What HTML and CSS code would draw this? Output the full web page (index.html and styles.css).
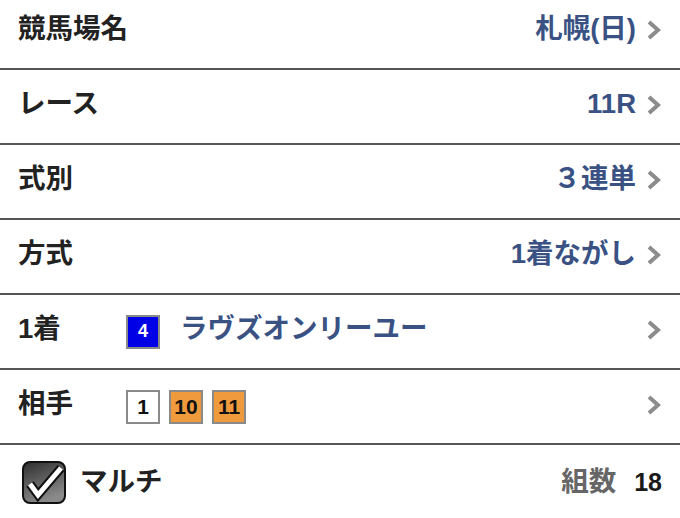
FILE: index.html
```html
<!DOCTYPE html>
<html lang="ja">
<head>
    <meta charset="UTF-8">
    <meta name="viewport" content="width=device-width, initial-scale=1.0">
    <title>投票内容</title>
    <link rel="stylesheet" href="styles.css">
</head>
<body>
    <div class="bet-list">
        <div class="row">
            <span class="label">競馬場名</span>
            <div class="row-right">
                <span class="value">札幌(日)</span>
                <svg class="chevron" width="16" height="22" viewBox="0 0 16 22"><polyline points="3,3 12,11 3,19" /></svg>
            </div>
        </div>
        <div class="row">
            <span class="label">レース</span>
            <div class="row-right">
                <span class="value">11R</span>
                <svg class="chevron" width="16" height="22" viewBox="0 0 16 22"><polyline points="3,3 12,11 3,19" /></svg>
            </div>
        </div>
        <div class="row">
            <span class="label">式別</span>
            <div class="row-right">
                <span class="value">３連単</span>
                <svg class="chevron" width="16" height="22" viewBox="0 0 16 22"><polyline points="3,3 12,11 3,19" /></svg>
            </div>
        </div>
        <div class="row">
            <span class="label">方式</span>
            <div class="row-right">
                <span class="value">1着ながし</span>
                <svg class="chevron" width="16" height="22" viewBox="0 0 16 22"><polyline points="3,3 12,11 3,19" /></svg>
            </div>
        </div>
        <div class="row">
            <span class="label label-short">1着</span>
            <div class="horses">
                <span class="num num-blue">4</span>
                <span class="value horse-name">ラヴズオンリーユー</span>
            </div>
            <svg class="chevron" width="16" height="22" viewBox="0 0 16 22"><polyline points="3,3 12,11 3,19" /></svg>
        </div>
        <div class="row">
            <span class="label label-short">相手</span>
            <div class="horses">
                <span class="num num-white">1</span>
                <span class="num num-orange">10</span>
                <span class="num num-orange">11</span>
            </div>
            <svg class="chevron" width="16" height="22" viewBox="0 0 16 22"><polyline points="3,3 12,11 3,19" /></svg>
        </div>
        <div class="row row-last">
            <div class="multi">
                <svg class="checkbox" width="46" height="46" viewBox="0 0 46 46">
                    <defs>
                        <linearGradient id="boxGrad" x1="0" y1="0" x2="0.4" y2="1">
                            <stop offset="0" stop-color="#2e2e2e" />
                            <stop offset="1" stop-color="#8a8a8a" />
                        </linearGradient>
                    </defs>
                    <rect x="2" y="2" width="42" height="41" rx="7" fill="url(#boxGrad)" stroke="#111" stroke-width="2" />
                    <polyline points="9,24 17,35 40,8" fill="none" stroke="#111" stroke-width="9" stroke-linejoin="miter" />
                    <polyline points="9,24 17,35 40,8" fill="none" stroke="#fff" stroke-width="5" stroke-linejoin="miter" />
                </svg>
                <span class="label">マルチ</span>
            </div>
            <div class="row-right">
                <span class="count-label">組数</span>
                <span class="count">18</span>
            </div>
        </div>
    </div>
</body>
</html>
```

FILE: styles.css
```css
* {
    margin: 0;
    padding: 0;
    box-sizing: border-box;
}

body {
    background: white;
    font-family: "Liberation Sans", "Noto Sans CJK JP", sans-serif;
    font-weight: bold;
    overflow: hidden;
}

.bet-list {
    margin-top: -5px;
}

.row {
    height: 75px;
    display: flex;
    align-items: center;
    padding: 0 18px;
    border-bottom: 2px solid #555;
}

.row-last {
    border-bottom: none;
    padding-left: 21px;
}

/* text sits a little above the row's centre line */
.label,
.value,
.count-label,
.count {
    line-height: 1.2;
    margin-bottom: 6px;
}

.row-last .label,
.row-last .count-label,
.row-last .count {
    margin-bottom: 2px;
}

.label {
    font-size: 27.5px;
    color: #222;
}

.label-short {
    width: 108px;
}

.row-right {
    margin-left: auto;
    display: flex;
    align-items: center;
    gap: 10px;
}

.value {
    font-size: 27.5px;
    color: #3a5283;
}

.chevron {
    fill: none;
    stroke: #8c8c8c;
    stroke-width: 4;
    margin-bottom: 3px;
}

.horses {
    flex: 1;
    display: flex;
    align-items: center;
    gap: 9px;
}

.horse-name {
    margin-left: 11px;
}

.num {
    width: 34px;
    height: 34px;
    display: flex;
    align-items: center;
    justify-content: center;
    border: 2px solid #8a8a8a;
    font-size: 21px;
    color: #111;
}

.num-blue {
    background: #0000e6;
    color: white;
    font-size: 18px;
}

.num-white {
    background: white;
}

.num-orange {
    background: #f09a3e;
}

.multi {
    display: flex;
    align-items: center;
    gap: 13px;
}

.count-label {
    font-size: 27.5px;
    color: #666;
}

.count {
    font-size: 25px;
    color: #1a1a1a;
    margin-left: 8px;
}
```
